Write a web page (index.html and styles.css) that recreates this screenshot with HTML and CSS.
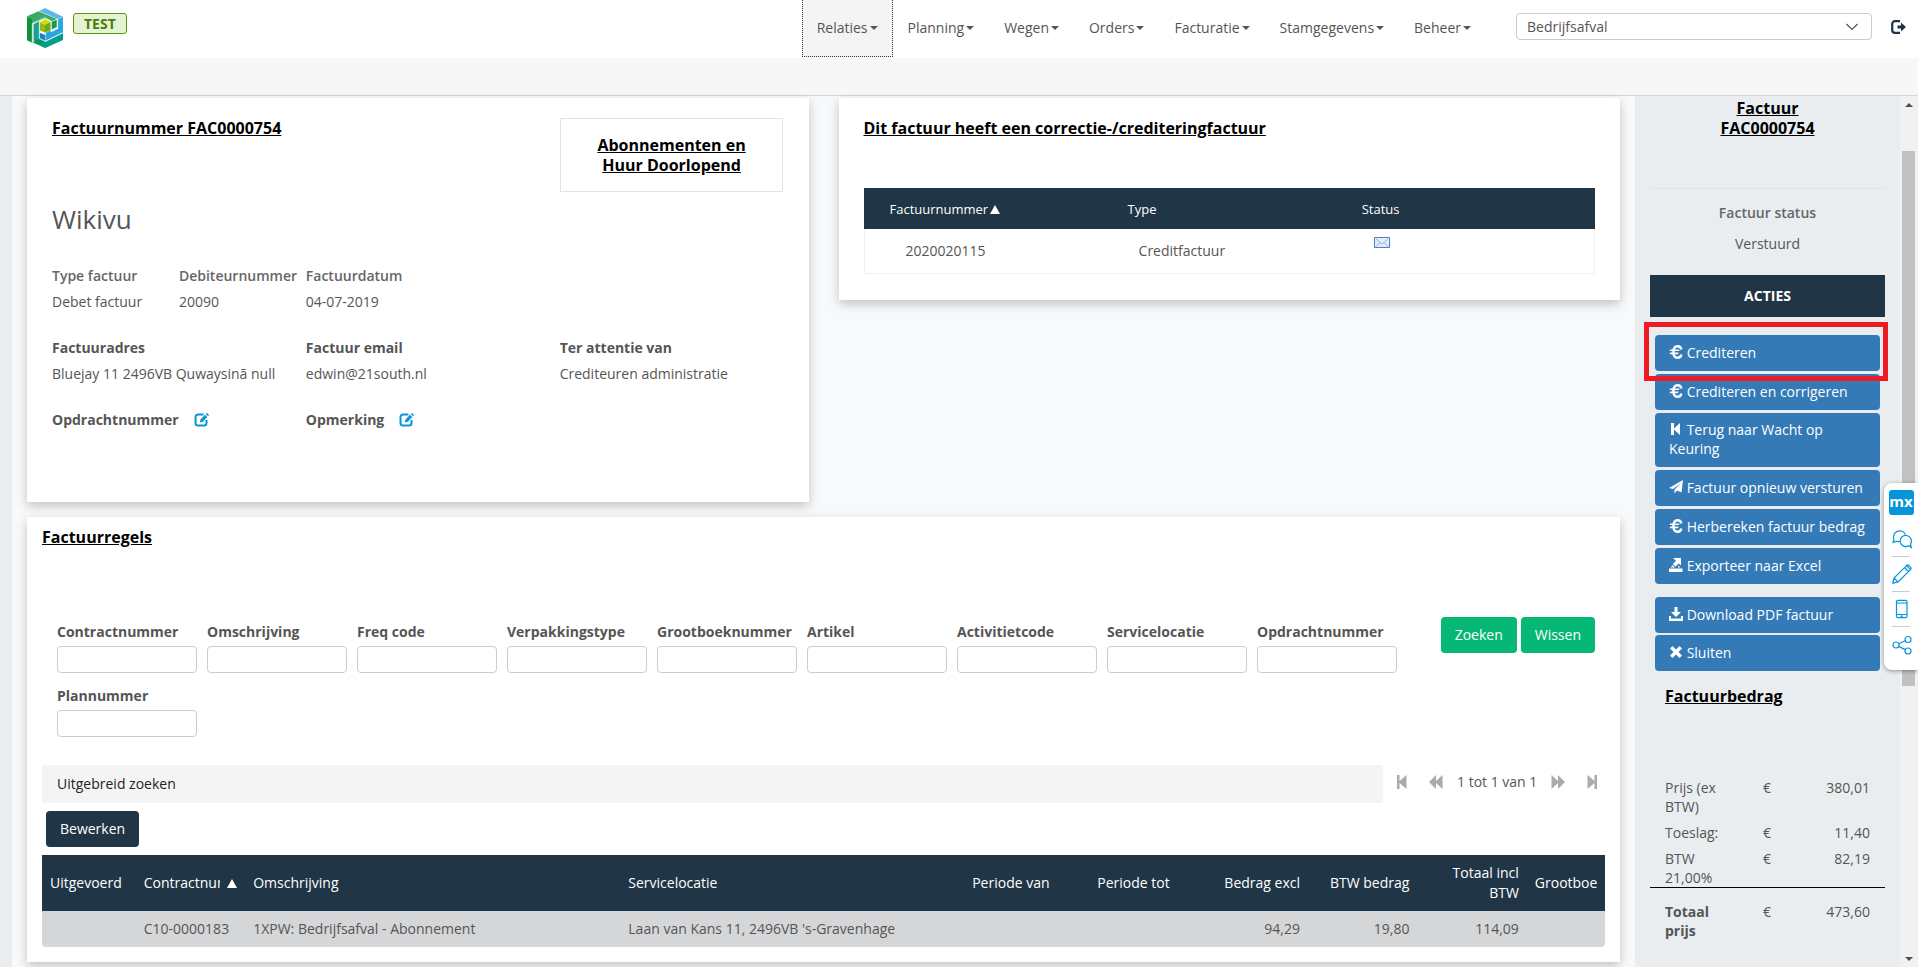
FILE: index.html
```html
<!DOCTYPE html>
<html lang="nl">
<head>
<meta charset="utf-8">
<title>Factuur FAC0000754</title>
<link rel="stylesheet" href="styles.css">
</head>
<body>
<svg class="sprite" aria-hidden="true">
  <symbol id="i-euro" viewBox="0 0 14 14"><path d="M12.300 4.500C12 2.300 10.500 1.200 8.500 1.200 5.500 1.200 4.400 3.800 4.400 7s1.100 5.800 4.100 5.800c2 0 3.500-1.100 3.800-3.300" fill="none" stroke="currentColor" stroke-width="2.400"/><path d="M1.300 4.500h9.200l-.5 1.600H.5zM1.300 7.600h8.200L9 9.200H.5z" fill="currentColor"/></symbol>
  <symbol id="i-first" viewBox="0 0 14 14"><path d="M2 1h3v5.500L11 1v12L5 7.500V13H2z" fill="currentColor"/></symbol>
  <symbol id="i-send" viewBox="0 0 14 14"><path d="M14 0 12.500 12.500 8 10.500 5.500 13.500V9.500L12 3 4 9 0 8z" fill="currentColor"/></symbol>
  <symbol id="i-export" viewBox="0 0 14 14"><path d="M0 10.500h13.500V14H0zM1.500 9.500 3.800 7l2.400 2.500zM9 9.500V7.500l2.500 2zM4 0h8v7.500L9.700 5.400 6.500 8.500 3.800 6 7 2.800z" fill="currentColor"/></symbol>
  <symbol id="i-download" viewBox="0 0 14 14"><path d="M5.500 0h3v5H12L7 10 2 5h3.500zM0 9h2v2.500h10V9h2v5H0z" fill="currentColor"/></symbol>
  <symbol id="i-close" viewBox="0 0 14 14"><path d="M3.500 1 7 4.500 10.500 1 13 3.500 9.500 7l3.500 3.500-2.500 2.500L7 9.500 3.500 13 1 10.500 4.500 7 1 3.500z" fill="currentColor"/></symbol>
  <symbol id="i-edit" viewBox="0 0 15 14"><path d="M9.500 1.500H4A2.500 2.500 0 0 0 1.500 4v6A2.500 2.500 0 0 0 4 12.500h6a2.500 2.500 0 0 0 2.500-2.500V7" fill="none" stroke="currentColor" stroke-width="2"/><path d="m5.800 9.500.7-3L11 1.800 13.300 4 8.800 8.700zM11.800 1 13 0l2 2-1 1.200z" fill="currentColor"/></symbol>
  <symbol id="i-page-first" viewBox="0 0 10 14"><path d="M0 0h2.500v6L9.500 0v14l-7-6v6H0z" fill="currentColor"/></symbol>
  <symbol id="i-page-last" viewBox="0 0 10 14"><path d="M10 0H7.500v6L.5 0v14l7-6v6H10z" fill="currentColor"/></symbol>
  <symbol id="i-page-prev" viewBox="0 0 14 14"><path d="M7 0v6l6.500-6v14L7 8v6L0 7z" fill="currentColor"/></symbol>
  <symbol id="i-page-next" viewBox="0 0 14 14"><path d="M7 0v6L.5 0v14L7 8v6l7-7z" fill="currentColor"/></symbol>
</svg>

<header class="topbar">
  <a class="brand" href="#" aria-label="Startpagina">
    <svg class="logo" viewBox="0 0 88 120" preserveAspectRatio="none" aria-hidden="true">
      <path d="M30 9 44 0l44 26-13 7z" fill="#5bbbe8"/>
      <path d="M76 34 88 27v46L46 98V74l12-7v6l18-11z" fill="#2ba6de"/>
      <path d="M0 25 28 10l45 23-13 7-16-9-31 16z" fill="#3bab62"/>
      <path d="M0 27 12 34 13 47v57L0 97z" fill="#11923a"/>
      <path d="M16 49 30 40v50l14 10-12 4-16-6z" fill="#1b9f8e"/>
      <path d="M13 103 30 93l15 8v19z" fill="#009758"/>
      <path d="m45 101 43-26v21l-43 24-17-10z" fill="#019f8b"/>
      <path d="m31 74 14 7v18l-14-9z" fill="#0f85cf"/>
      <path d="m60 41 13-6v24l-13 6z" fill="#15994b"/>
      <path d="m31 43 13-9 14 8-14 8z" fill="#d5dc00"/>
      <path d="m31 43 13 7v24l-13-7z" fill="#93bd10"/>
      <path d="m44 50 14-8v24l-14 8z" fill="#6ea81c"/>
      <path d="M13 104V46l31-17 15 10v27l15-9V33M30 42v50l15 8 43-26" fill="none" stroke="#d9f1ea" stroke-width="2"/>
    </svg>
  </a>
  <span class="env">TEST</span>
  <nav class="menu">
    <button class="menu-item active" type="button">Relaties<i class="caret"></i></button>
    <button class="menu-item" type="button">Planning<i class="caret"></i></button>
    <button class="menu-item" type="button">Wegen<i class="caret"></i></button>
    <button class="menu-item" type="button">Orders<i class="caret"></i></button>
    <button class="menu-item" type="button">Facturatie<i class="caret"></i></button>
    <button class="menu-item" type="button">Stamgegevens<i class="caret"></i></button>
    <button class="menu-item" type="button">Beheer<i class="caret"></i></button>
  </nav>
  <div class="picker">
    <select aria-label="Afdeling"><option>Bedrijfsafval</option></select>
    <svg class="chevron" viewBox="0 0 12 8" aria-hidden="true"><path d="m.5 1 5.500 5.500L11.500 1" fill="none" stroke="#555" stroke-width="1.200"/></svg>
  </div>
  <a class="logout" href="#" aria-label="Uitloggen">
    <svg viewBox="0 0 15 14" aria-hidden="true"><path d="M9 1.200H4A2.800 2.800 0 0 0 1.200 4v6A2.800 2.800 0 0 0 4 12.800h5" fill="none" stroke="currentColor" stroke-width="2.200"/><path d="M6.500 5.500H10v-3L15 7l-5 4.500v-3H6.500z" fill="currentColor"/></svg>
  </a>
</header>
<div class="subbar"></div>

<div class="workspace">
  <main class="content">
    <div class="pair">
      <section class="card invoice">
        <div class="grid">
          <h2 class="title span4">Factuurnummer FAC0000754</h2>
          <div class="kind title span2">Abonnementen en Huur Doorlopend</div>
        </div>
        <h1 class="customer">Wikivu</h1>
        <dl class="grid facts soft">
          <div><dt>Type factuur</dt><dd>Debet factuur</dd></div>
          <div><dt>Debiteurnummer</dt><dd>20090</dd></div>
          <div><dt>Factuurdatum</dt><dd>04-07-2019</dd></div>
        </dl>
        <dl class="grid facts">
          <div class="span2"><dt>Factuuradres</dt><dd>Bluejay 11 2496VB Quwaysinā null</dd></div>
          <div class="span2"><dt>Factuur email</dt><dd>edwin@21south.nl</dd></div>
          <div class="span2"><dt>Ter attentie van</dt><dd>Crediteuren administratie</dd></div>
        </dl>
        <div class="grid facts">
          <div class="span2 editable">Opdrachtnummer <a href="#" aria-label="Opdrachtnummer bewerken"><svg><use href="#i-edit"/></svg></a></div>
          <div class="span2 editable">Opmerking <a href="#" aria-label="Opmerking bewerken"><svg><use href="#i-edit"/></svg></a></div>
        </div>
      </section>

      <section class="card credit">
        <h2 class="title">Dit factuur heeft een correctie-/crediteringfactuur</h2>
        <table class="credit-table">
          <colgroup><col class="w32"><col class="w32"><col></colgroup>
          <thead><tr><th>Factuurnummer<svg class="sort" viewBox="0 0 10 9" aria-hidden="true"><path d="m5 0 5 9H0z" fill="currentColor"/></svg></th><th>Type</th><th>Status</th></tr></thead>
          <tbody><tr><td>2020020115</td><td>Creditfactuur</td><td class="status"><svg class="mail" viewBox="0 0 16 11" preserveAspectRatio="none" role="img" aria-label="Verstuurd"><path d="M.5.5h15v10H.5z" fill="#e3edfb" stroke="#4d7ebf"/><path d="m2 2 6 5 6-5M2 9.500l4-4M14 9.500l-4-4" fill="none" stroke="#8db0e0"/></svg></td></tr></tbody>
        </table>
      </section>
    </div>

    <section class="card lines">
      <h2 class="title">Factuurregels</h2>
      <form class="search">
        <div class="fields">
          <label>Contractnummer<input type="text"></label>
          <label>Omschrijving<input type="text"></label>
          <label>Freq code<input type="text"></label>
          <label>Verpakkingstype<input type="text"></label>
          <label>Grootboeknummer<input type="text"></label>
          <label>Artikel<input type="text"></label>
          <label>Activitietcode<input type="text"></label>
          <label>Servicelocatie<input type="text"></label>
          <label>Opdrachtnummer<input type="text"></label>
          <label>Plannummer<input type="text"></label>
        </div>
        <div class="search-buttons">
          <button class="btn green" type="button">Zoeken</button>
          <button class="btn green" type="button">Wissen</button>
        </div>
      </form>
      <div class="toolbar">
        <button class="expander" type="button">Uitgebreid zoeken</button>
        <div class="pager">
          <button class="outer" type="button" aria-label="Eerste"><svg><use href="#i-page-first"/></svg></button>
          <button type="button" aria-label="Vorige"><svg><use href="#i-page-prev"/></svg></button>
          <span>1 tot 1 van 1</span>
          <button type="button" aria-label="Volgende"><svg><use href="#i-page-next"/></svg></button>
          <button class="outer" type="button" aria-label="Laatste"><svg><use href="#i-page-last"/></svg></button>
        </div>
      </div>
      <button class="btn dark" type="button">Bewerken</button>
      <table class="lines-table">
        <colgroup><col class="w6"><col class="w7"><col class="w24"><col class="w22"><col class="w8"><col class="w8"><col class="w6"><col class="w7"><col class="w7"><col class="w5"></colgroup>
        <thead><tr>
          <th>Uitgevoerd</th>
          <th><span class="sorted"><span class="clip">Contractnummer</span><svg class="sort" viewBox="0 0 10 9" aria-hidden="true"><path d="m5 0 5 9H0z" fill="currentColor"/></svg></span></th>
          <th>Omschrijving</th><th>Servicelocatie</th><th>Periode van</th><th>Periode tot</th>
          <th class="num">Bedrag excl</th><th class="num">BTW bedrag</th><th class="num">Totaal incl BTW</th>
          <th><span class="clip">Grootboe</span></th>
        </tr></thead>
        <tbody><tr>
          <td></td><td>C10-0000183</td><td>1XPW: Bedrijfsafval - Abonnement</td><td>Laan van Kans 11, 2496VB 's-Gravenhage</td><td></td><td></td>
          <td class="num">94,29</td><td class="num">19,80</td><td class="num">114,09</td><td></td>
        </tr></tbody>
      </table>
    </section>
  </main>

  <aside class="side">
    <h2 class="title side-title">Factuur<br>FAC0000754</h2>
    <div class="state"><strong>Factuur status</strong><span>Verstuurd</span></div>
    <h3 class="side-head">ACTIES</h3>
    <div class="actions">
      <div class="marked"><button class="action" type="button"><svg><use href="#i-euro"/></svg> Crediteren</button></div>
      <button class="action" type="button"><svg><use href="#i-euro"/></svg> Crediteren en corrigeren</button>
      <button class="action" type="button"><svg><use href="#i-first"/></svg> Terug naar Wacht op Keuring</button>
      <button class="action" type="button"><svg><use href="#i-send"/></svg> Factuur opnieuw versturen</button>
      <button class="action" type="button"><svg><use href="#i-euro"/></svg> Herbereken factuur bedrag</button>
      <button class="action" type="button"><svg><use href="#i-export"/></svg> Exporteer naar Excel</button>
    </div>
    <div class="actions more">
      <button class="action" type="button"><svg><use href="#i-download"/></svg> Download PDF factuur</button>
      <button class="action" type="button"><svg><use href="#i-close"/></svg> Sluiten</button>
    </div>
    <h2 class="title amount-title">Factuurbedrag</h2>
    <div class="amounts">
      <div class="amount"><span>Prijs (ex BTW)</span><span>€</span><span>380,01</span></div>
      <div class="amount"><span>Toeslag:</span><span>€</span><span>11,40</span></div>
      <div class="amount"><span>BTW 21,00%</span><span>€</span><span>82,19</span></div>
    </div>
    <div class="amount total"><strong>Totaal prijs</strong><span>€</span><span>473,60</span></div>
  </aside>

  <div class="scroll" aria-hidden="true"><i class="up"></i><i class="thumb"></i><i class="down"></i></div>
</div>

<div class="feedback">
  <span class="mx">mx</span>
  <button type="button" aria-label="Berichten"><svg viewBox="0 0 20 20"><path d="M8 12.500a7 7 0 0 1-3.500-.3L1 13.500l1-3.200A6 5.800 0 1 1 13.500 5.500" /><path d="M16.800 16.700A5.600 5.600 0 1 1 18.500 15l.8 3.500z"/></svg></button>
  <button type="button" aria-label="Bewerken"><svg viewBox="0 0 20 20"><path d="M.8 19.200 2 14 14.500 1.600a1.800 1.800 0 0 1 2.500 0l1.500 1.500a1.800 1.800 0 0 1 0 2.500L6 18zM12.500 3.500l4 4M14.500 1.700l4 4M2 14l4 4"/></svg></button>
  <button type="button" aria-label="Mobiel"><svg viewBox="0 0 20 20"><path d="M6 1.300h7.500a1.500 1.500 0 0 1 1.500 1.500v14.400a1.500 1.500 0 0 1-1.500 1.500H6a1.500 1.500 0 0 1-1.500-1.500V2.800A1.500 1.500 0 0 1 6 1.300zM4.500 4H15M4.500 15.500H15M8.500 17.200H11"/></svg></button>
  <button type="button" aria-label="Delen"><svg viewBox="0 0 20 20"><circle cx="4" cy="10" r="3"/><circle cx="16" cy="4.500" r="3"/><circle cx="16" cy="16" r="3"/><path d="m6.700 8.700 6.500-3M6.700 11.400l6.500 3.200"/></svg></button>
</div>
</body>
</html>
```
FILE: styles.css
```css
*, *::before, *::after { box-sizing: border-box; }

body {
  margin: 0;
  min-height: 100vh;
  display: flex;
  flex-direction: column;
  position: relative;
  background: #fff;
  color: #555;
  font: 14px/20px "Open Sans", "Noto Sans", sans-serif;
}

h1, h2, h3, dl, dd { margin: 0; }
button, input, select { font: inherit; color: inherit; margin: 0; }
button { border: 0; background: none; padding: 0; cursor: pointer; }
a { color: inherit; }
.sprite { display: none; }

.title {
  color: #000;
  font-size: 16px;
  line-height: 20px;
  font-weight: 700;
  text-decoration: underline;
}

/* top bar */
.topbar { display: flex; align-items: flex-start; height: 58px; padding: 0 12px 0 27px; }
.brand { margin: 8px 10px 0 0; }
.logo { display: block; width: 36px; height: 40px; }
.env {
  margin-top: 13px;
  padding: 0 10px;
  border: 1px solid #5c9412;
  border-radius: 3px;
  background: #e4f3d0;
  color: #4a7d0c;
  font-weight: 700;
  line-height: 19px;
}
.menu { display: flex; margin-left: auto; }
.menu-item { display: flex; align-items: center; gap: 2px; height: 57px; padding: 0 14px; border: 1px solid transparent; border-top: 0; }
.menu-item.active { background: #f4f4f4; border: 1px dotted #333; border-top: 0; }
.caret { border: 4px solid transparent; border-top-color: #555; border-bottom: 0; }
.picker { position: relative; width: 356px; margin: 13px 19px 0 30px; }
.picker select {
  display: block;
  width: 100%;
  height: 27px;
  padding: 0 10px;
  appearance: none;
  border: 1px solid #ccc;
  border-radius: 4px;
  background: #fff;
}
.chevron { position: absolute; right: 14px; top: 10px; width: 12px; height: 8px; pointer-events: none; }
.logout { margin-top: 20px; color: #1f3547; }
.logout svg { display: block; width: 15px; height: 14px; }
.subbar { height: 38px; background: #f7f7f7; border-bottom: 1px solid #d5d6d7; }

/* workspace */
.workspace { flex: 1; display: flex; background: #f7f9fb; border-left: 12px solid #e9edf0; }
.content { flex: 1; min-width: 0; display: flex; flex-direction: column; gap: 15px; padding: 2px 15px 5px; }
.card { background: #fff; box-shadow: 0 4px 10px rgba(0, 0, 0, .22); }
.pair { display: grid; grid-template-columns: 1fr 1fr; gap: 30px; align-items: start; }

.invoice { padding: 20px 5px 72px 15px; }
.grid { display: grid; grid-template-columns: repeat(6, minmax(0, 1fr)); }
.grid > * { margin-left: 10px; }
.span2 { grid-column: span 2; }
.span4 { grid-column: span 4; }
.kind { margin-right: 20px; padding: 16px 30px; border: 1px solid #e3e3e3; text-align: center; }
.customer { margin: 12px 0 32px 10px; font-size: 26px; line-height: 30px; font-weight: 400; }
.facts { margin-bottom: 26px; white-space: nowrap; }
.facts:last-child { margin-bottom: 0; }
.facts dt, .editable { font-weight: 700; }
.facts dt { margin-bottom: 6px; }
.facts.soft dt { font-weight: 600; color: #666; }
.editable { display: flex; align-items: center; gap: 15px; }
.editable a { color: #0595db; }
.editable svg { display: block; width: 15px; height: 14px; }

.credit { padding: 20px 25px 26px; }
table { width: 100%; border-spacing: 0; table-layout: fixed; }
th { font-weight: 500; text-align: left; color: #fff; background: #203546; }
.credit-table { margin-top: 50px; }
.credit-table th { padding: 10px 0 10px 30px; height: 41px; font-size: 13px; }
.credit-table th:first-child { padding-left: 26px; }
.credit-table td { height: 45px; border-bottom: 1px solid #f0f0f0; padding: 0 0 0 41px; }
.credit-table td.status { padding: 8px 0 0 42px; vertical-align: top; border-right: 1px solid #f0f0f0; }
.credit-table td:first-child { border-left: 1px solid #f0f0f0; }
.sort { width: 10px; height: 9px; margin-left: 2px; }
.mail { display: block; width: 16px; height: 11px; }
.w32 { width: 32%; }

.lines { padding: 10px 15px 15px; }
.search { display: flex; margin: 70px 10px 28px 15px; }
.fields { flex: 1; display: flex; flex-wrap: wrap; gap: 13px 10px; padding-top: 5px; }
.fields label { width: 140px; font-weight: 700; white-space: nowrap; }
.fields input { display: block; width: 100%; height: 27px; margin-top: 4px; padding: 0 10px; border: 1px solid #ccc; border-radius: 4px; background: #fff; font-weight: 400; }
.search-buttons { display: flex; align-items: flex-start; gap: 4px; }
.btn { height: 36px; padding: 0 14px; border-radius: 4px; color: #fff; }
.green { background: #05b876; }
.dark { display: block; margin: 8px 4px; background: #203546; }
.toolbar { display: flex; }
.expander { flex: 1; height: 38px; padding: 0 15px; background: #f4f4f4; color: #222; text-align: left; }
.pager { display: flex; align-items: center; gap: 14px; width: 222px; padding: 0 0 4px 14px; }
.pager button { color: #aaa; }
.pager svg { display: block; width: 14px; height: 14px; }
.pager .outer svg { width: 10px; }
.pager .outer:first-child { margin-right: 8px; }
.pager .outer:last-child { margin-left: 8px; }

.lines-table th { height: 56px; padding: 8px; }
.lines-table td { height: 36px; padding: 8px; background: #d5d6d8; }
.lines-table td:first-child { border-bottom-left-radius: 4px; }
.lines-table td:last-child { border-bottom-right-radius: 4px; }
.lines-table .num { text-align: right; }
.sorted { display: flex; align-items: center; gap: 5px; }
.clip { display: block; overflow: hidden; white-space: nowrap; }
.sorted .sort { flex: none; }
.w5 { width: 5%; } .w6 { width: 6%; } .w7 { width: 7%; } .w8 { width: 8%; } .w22 { width: 22%; } .w24 { width: 24%; }

/* side panel */
.side { width: 265px; padding: 2px 15px 0; background: #e9edf0; }
.side-title { padding-bottom: 50px; border-bottom: 1px solid #e1e4e6; text-align: center; }
.state { display: flex; flex-direction: column; align-items: center; gap: 11px; padding: 14px 0 21px; }
.state strong { font-weight: 600; color: #666; }
.side-head { padding: 11px 0; background: #203546; color: #fff; font-size: 14px; line-height: 20px; font-weight: 700; text-align: center; }
.actions { display: flex; flex-direction: column; gap: 3px; margin: 18px 5px 0; }
.actions.more { gap: 2px; margin-top: 13px; }
.action { width: 100%; min-height: 36px; padding: 7px 10px 9px 14px; border-radius: 4px; background: #337ab7; color: #fff; line-height: 19px; text-align: left; }
.action svg { display: inline-block; width: 14px; height: 14px; vertical-align: -1px; }
.marked { position: relative; display: flex; }
.marked::after { content: ""; position: absolute; inset: -13px -8px -10px -11px; border: 5px solid #ed1c24; pointer-events: none; }
.amount-title { margin: 15px 15px 72px; }
.amounts { display: flex; flex-direction: column; gap: 7px; border-bottom: 1px solid #000; }
.amount { display: grid; grid-template-columns: 5fr 3fr 4fr; line-height: 19px; }
.amount > * { padding-left: 15px; }
.amount > :first-child { padding-right: 15px; }
.amount > :last-child { padding: 0 15px 0 0; text-align: right; }
.total { margin-top: 14px; }

/* scroll track */
.scroll { display: flex; flex-direction: column; align-items: center; width: 18px; padding: 6px 1px 6px 0; background: #f1f1f1; }
.scroll i { flex: none; }
.scroll .up { border: 4px solid transparent; border-top: 0; border-bottom-color: #505050; margin: 1px 0 44px; }
.scroll .thumb { flex: 533 0 0px; width: 13px; background: #c1c1c1; }
.scroll .down { border: 4px solid transparent; border-bottom: 0; border-top-color: #505050; }
.scroll::after { content: ""; flex: 270 0 0px; order: 1; }
.scroll .down { order: 2; }

/* floating feedback bar */
.feedback {
  position: absolute;
  right: 0;
  top: 483px;
  display: flex;
  flex-direction: column;
  align-items: center;
  width: 34px;
  height: 187px;
  padding: 7px 0 0;
  border-radius: 8px 0 0 8px;
  background: #fff;
  box-shadow: 0 1px 4px rgba(0, 0, 0, .4);
}
.mx { width: 25px; height: 25px; margin-bottom: 7px; border-radius: 3px; background: #0595db; color: #fff; font-weight: 700; font-size: 15px; line-height: 22px; text-align: center; }
.feedback button { width: 18px; height: 35px; border-bottom: 1px solid #ccc; }
.feedback button:last-child { border-bottom: 0; }
.feedback svg { display: block; width: 20px; height: 20px; fill: none; stroke: #0595db; stroke-width: 1.200; }
```
